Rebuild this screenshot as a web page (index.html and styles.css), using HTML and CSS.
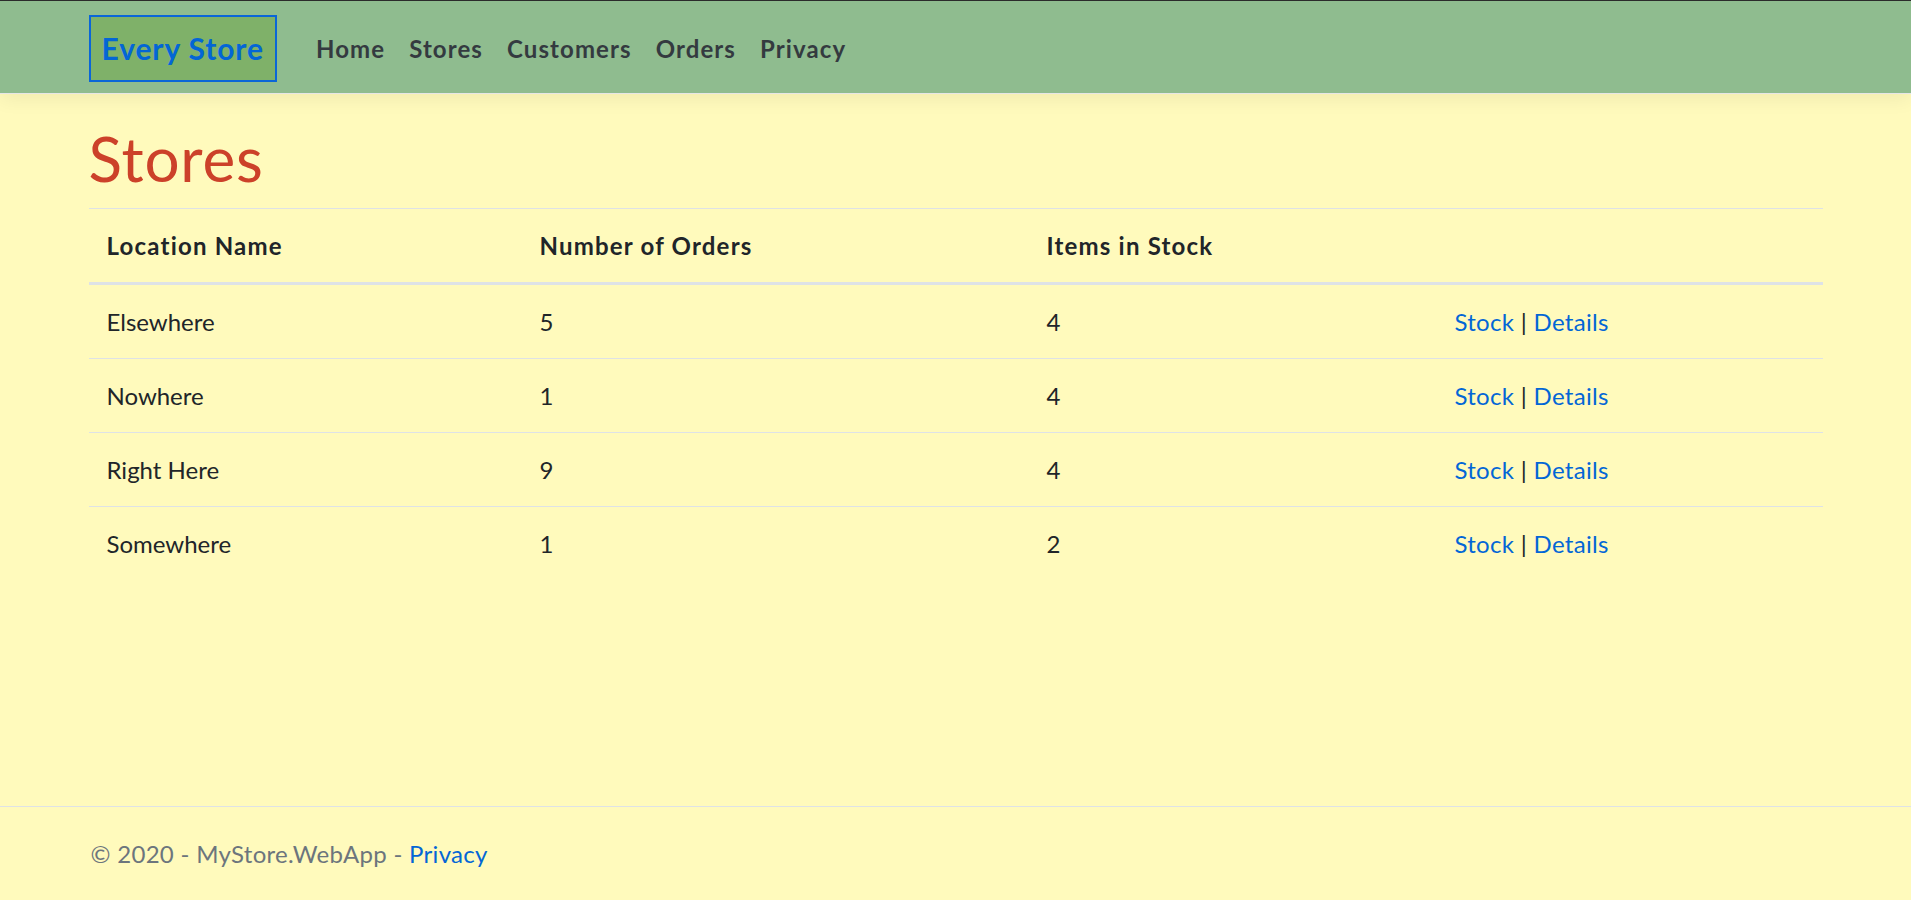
FILE: index.html
```html
<!DOCTYPE html>
<html lang="en">
<head>
<meta charset="utf-8">
<title>Stores - MyStore.WebApp</title>
<link rel="stylesheet" href="styles.css">
</head>
<body>
<header class="navbar">
  <div class="container nav-inner">
    <a class="brand" href="#">Every Store</a>
    <nav class="nav-links">
      <a class="nav-link" href="#">Home</a>
      <a class="nav-link" href="#">Stores</a>
      <a class="nav-link" href="#">Customers</a>
      <a class="nav-link" href="#">Orders</a>
      <a class="nav-link" href="#">Privacy</a>
    </nav>
  </div>
</header>
<main class="main">
  <div class="container">
    <h1 class="title">Stores</h1>
    <table class="table">
      <colgroup>
        <col class="c1"><col class="c2"><col class="c3"><col class="c4">
      </colgroup>
      <thead>
        <tr><th>Location Name</th><th>Number of Orders</th><th>Items in Stock</th><th></th></tr>
      </thead>
      <tbody>
        <tr><td>Elsewhere</td><td>5</td><td>4</td><td class="actions"><a href="#">Stock</a> | <a href="#">Details</a></td></tr>
        <tr><td>Nowhere</td><td>1</td><td>4</td><td class="actions"><a href="#">Stock</a> | <a href="#">Details</a></td></tr>
        <tr><td>Right Here</td><td>9</td><td>4</td><td class="actions"><a href="#">Stock</a> | <a href="#">Details</a></td></tr>
        <tr><td>Somewhere</td><td>1</td><td>2</td><td class="actions"><a href="#">Stock</a> | <a href="#">Details</a></td></tr>
      </tbody>
    </table>
  </div>
</main>
<footer class="footer">
  <div class="container footer-inner">
    &copy; 2020 - MyStore.WebApp - <a href="#">Privacy</a>
  </div>
</footer>
</body>
</html>
```

FILE: styles.css
```css
* { box-sizing: border-box; }
html, body { height: 100%; }
body {
  margin: 0;
  min-height: 100vh;
  display: flex;
  flex-direction: column;
  background: #fffabc;
  font-family: Lato, "Liberation Sans", sans-serif;
  font-size: 24px;
  line-height: 1.5;
  color: #212529;
}
a { color: #0366d6; text-decoration: none; }

.container {
  width: 1734px;
  margin: 0 auto;
}

.navbar {
  background: #8fbc8f;
  border-top: 1px solid #2b2b2b;
  border-bottom: 1px solid #e6e6e6;
  box-shadow: 0 6px 18px rgba(0, 0, 0, 0.06);
  position: relative;
  z-index: 1;
}
.nav-inner {
  height: 92px;
  display: flex;
  align-items: center;
}
.brand {
  display: flex;
  align-items: center;
  height: 67px;
  padding: 0 11px;
  margin-top: 3px;
  border: 2px solid #0a66d8;
  background: #7fb169;
  color: #0366d6;
  font-weight: 700;
  font-size: 30px;
  letter-spacing: 0.9px;
  margin-right: 27px;
}
.nav-links {
  display: flex;
  margin-top: 4px;
}
.nav-link {
  padding: 0 12px;
  font-weight: 700;
  letter-spacing: 1.1px;
  color: #343a40;
}

.main {
  flex: 1;
  padding-top: 28px;
}
.title {
  margin: 0 0 14px;
  font-size: 62px;
  font-weight: 400;
  line-height: 72px;
  letter-spacing: 0.8px;
  color: #cc4129;
}

.table {
  width: 100%;
  border-collapse: collapse;
  table-layout: fixed;
}
.c1 { width: 433px; }
.c2 { width: 507px; }
.c3 { width: 408px; }
.c4 { width: 386px; }
.table th,
.table td {
  text-align: left;
  padding: 18px;
  line-height: 37px;
  border-top: 1px solid #dee2e6;
  vertical-align: top;
}
.table th {
  font-weight: 700;
  letter-spacing: 1.2px;
  border-bottom: 3px solid #dee2e6;
}
.table .actions { letter-spacing: 0.3px; }

.footer {
  border-top: 1px solid #dee2e6;
  color: #6c757d;
}
.footer-inner {
  height: 93px;
  line-height: 93px;
  padding-left: 2px;
  letter-spacing: 0.3px;
  white-space: nowrap;
}
```
